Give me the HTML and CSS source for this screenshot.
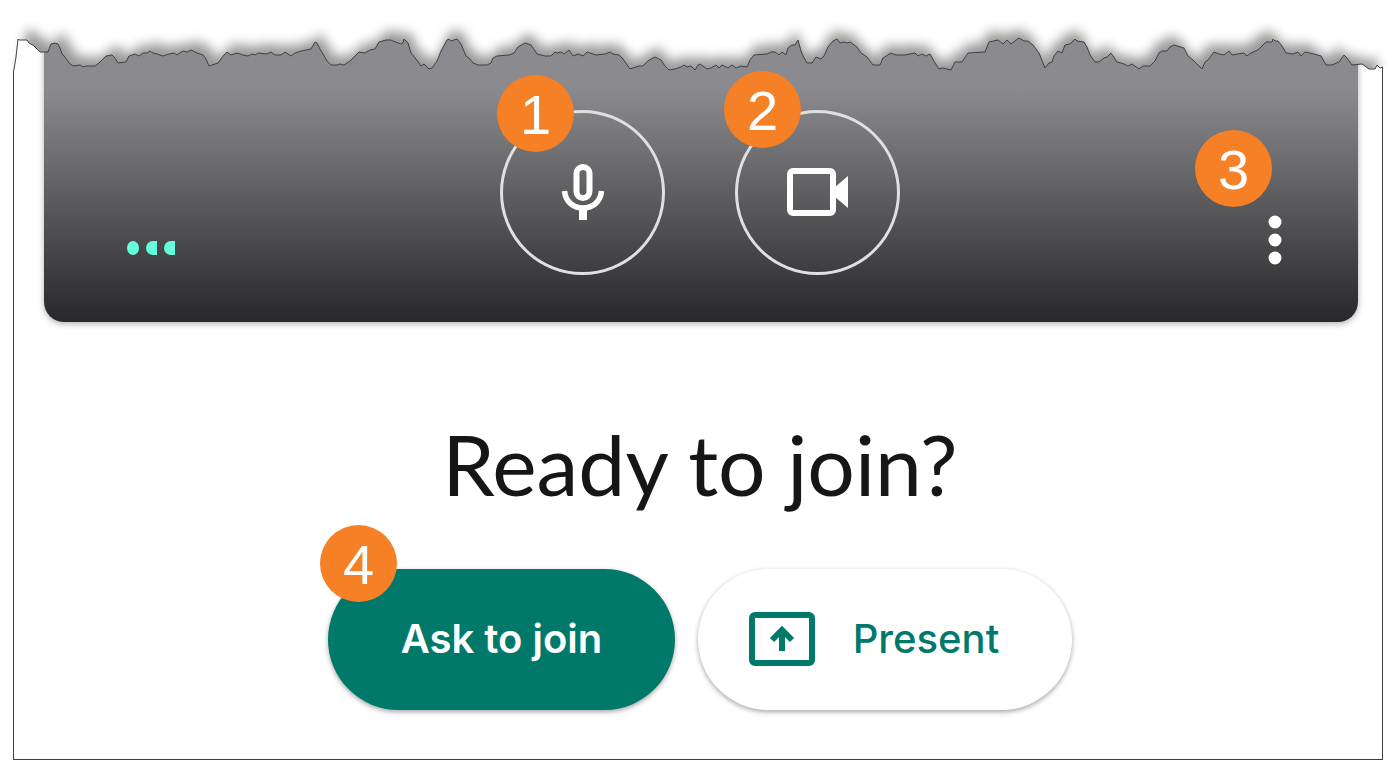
FILE: index.html
```html
<!DOCTYPE html>
<html lang="en">
<head>
    <meta charset="UTF-8">
    <meta name="viewport" content="width=device-width, initial-scale=1.0">
    <title>Ready to join?</title>
    <link rel="stylesheet" href="styles.css">
</head>
<body>

    <main class="frame">
        <section class="preview">
            <svg class="level" viewBox="0 0 50 16" aria-hidden="true">
                <ellipse cx="6" cy="8" rx="6" ry="7"/>
                <path d="M30 1v14h-4a7 7 0 0 1 0-14z"/>
                <path d="M48 1v14h-4a7 7 0 0 1 0-14z"/>
            </svg>

            <div class="controls">
                <div class="control">
                    <button class="round" type="button" aria-label="Turn off microphone">
                        <svg width="44" height="58" viewBox="0 0 44 58">
                            <rect x="15.500" y="4" width="13" height="31" rx="6.500" fill="none" stroke="#fff" stroke-width="6"/>
                            <path d="M3.500 28c1 11 9 17 18.500 17s17.500-6 18.500-17" fill="none" stroke="#fff" stroke-width="5.500"/>
                            <path d="M22 45v12" fill="none" stroke="#fff" stroke-width="8"/>
                        </svg>
                    </button>
                    <span class="badge badge-mic">1</span>
                </div>
                <div class="control">
                    <button class="round" type="button" aria-label="Turn off camera">
                        <svg width="62" height="48" viewBox="0 0 62 48">
                            <rect x="3" y="3" width="43" height="42" rx="3" fill="none" stroke="#fff" stroke-width="6"/>
                            <path d="M47 20L61 8v32L47 28z" fill="#fff"/>
                        </svg>
                    </button>
                    <span class="badge badge-camera">2</span>
                </div>
            </div>

            <div class="control more">
                <button class="menu" type="button" aria-label="More options">
                    <svg width="14" height="50" viewBox="0 0 14 50" fill="#fff">
                        <circle cx="7" cy="7" r="6.500"/>
                        <circle cx="7" cy="25" r="6.500"/>
                        <circle cx="7" cy="43" r="6.500"/>
                    </svg>
                </button>
                <span class="badge badge-more">3</span>
            </div>
        </section>

        <h1>Ready to join?</h1>

        <div class="actions">
            <div class="control">
                <button class="pill ask" type="button">Ask to join</button>
                <span class="badge badge-ask">4</span>
            </div>
            <button class="pill present" type="button">
                <svg width="66" height="54" viewBox="0 0 66 54">
                    <rect x="3" y="3" width="60" height="48" rx="3" fill="none" stroke="#00796b" stroke-width="6"/>
                    <path d="M33 39V19M23 28l10-10 10 10" fill="none" stroke="#00796b" stroke-width="6"/>
                </svg>
                Present
            </button>
        </div>
    </main>

    <!-- Torn paper edge -->
    <svg class="torn" viewBox="0 0 1397 80" preserveAspectRatio="none" aria-hidden="true">
        <defs>
            <filter id="soft" x="-5%" y="-50%" width="110%" height="200%">
                <feGaussianBlur stdDeviation="6"/>
            </filter>
            <clipPath id="above">
                <path id="cut"/>
            </clipPath>
        </defs>
        <g clip-path="url(#above)">
            <rect width="1397" height="80" fill="#fff"/>
            <path id="shadow" class="torn-shadow" transform="translate(8 -9) scale(0.99 1)" filter="url(#soft)"/>
        </g>
        <path id="edge" class="torn-line" d="M13.500 100L13.500 72 16 57 18 39 19 40 27 40 29 43 34 46 37 49 40 52 48 52 51 44 55 43 58 44 60 48 62 54 65 57 69 63 73 66 80 65 83 67 86 66 95 66 99 63 106 56 112 55 115 58 118 63 126 62 129 56 135 54 139 56 143 53 147 53 150 51 153 53 157 54 163 56 169 54 174 53 177 55 183 51 187 52 191 50 197 53 203 55 206 59 209 66 218 63 224 55 227 52 231 55 237 53 243 55 248 56 252 54 255 55 258 53 267 54 271 52 275 55 281 55 285 52 291 56 295 53 301 51 311 49 315 42 317 43 321 51 323 54 327 61 331 65 337 65 340 64 344 65 350 61 359 52 365 53 370 50 375 49 379 42 386 40 391 40 393 41 401 44 403 43 404 39 408 43 411 53 416 59 421 66 424 64 429 69 432 68 437 61 441 51 447 40 449 39 451 41 457 39 461 44 466 56 470 59 473 63 478 65 487 65 491 63 493 58 497 56 509 55 514 53 518 47 525 43 531 45 537 54 545 56 551 56 555 52 557 53 561 52 564 54 569 50 573 56 578 54 583 56 587 52 596 55 605 54 610 52 613 54 619 55 623 59 630 69 639 66 643 66 649 60 655 57 661 60 665 66 669 70 675 69 681 67 684 65 687 67 691 66 695 70 698 65 700 64 707 69 711 68 716 65 719 68 722 65 728 68 732 65 736 68 741 66 747 67 750 60 754 55 767 54 771 52 775 52 779 55 782 52 786 55 788 48 792 45 795 45 798 40 801 51 804 58 807 63 812 63 816 57 821 59 824 56 828 47 833 41 837 39 840 43 844 42 847 43 850 42 857 47 861 53 867 57 873 65 880 65 883 58 891 53 896 55 905 55 915 53 918 56 922 54 926 56 930 54 935 63 939 69 943 68 951 70 955 62 962 62 968 53 985 52 989 42 998 40 1003 44 1007 40 1011 44 1019 38 1024 41 1028 41 1033 45 1039 53 1045 68 1049 63 1052 62 1054 56 1058 51 1062 53 1065 45 1070 44 1075 39 1077 41 1084 42 1087 47 1090 55 1095 62 1099 62 1104 58 1107 57 1111 53 1117 62 1124 64 1128 66 1132 64 1139 69 1143 66 1150 66 1155 61 1159 53 1162 51 1167 51 1170 47 1174 45 1184 48 1188 56 1194 61 1202 69 1205 62 1208 60 1214 52 1219 54 1224 55 1229 51 1232 55 1244 53 1247 56 1251 53 1258 50 1266 42 1272 42 1273 39 1275 41 1278 41 1282 46 1286 53 1293 54 1298 52 1301 56 1305 52 1314 54 1321 56 1326 65 1332 65 1339 62 1344 55 1347 58 1352 65 1362 64 1369 69 1375 69 1377 65 1380 68 1383 67"/>
    </svg>

    <script>
        // Close the torn line upwards for the paper above it and downwards for its shadow
        const line = document.getElementById('edge').getAttribute('d');
        document.getElementById('cut').setAttribute('d', line + ' H1397 V0 H0 V100z');
        document.getElementById('shadow').setAttribute('d', line + ' V100z');
    </script>

</body>
</html>
```
FILE: styles.css
```css
/* Global Styles */
* {
    box-sizing: border-box;
}

body {
    margin: 0;
    position: relative;
    background-color: #fff;
    color: #161616;
    font-family: Lato, 'Open Sans', sans-serif;
}

button {
    padding: 0;
    border: none;
    background: none;
    font-family: inherit;
    cursor: pointer;
}

svg {
    display: block;
}

.frame {
    margin: 0 14px 0 13px;
    padding: 0 24px 49px 30px;
    border: 1px solid #404040;
    border-top: none;
}

/* Camera preview */
.preview {
    display: grid;
    grid-template-columns: 1fr auto 1fr;
    align-items: end;
    padding: 110px 76px 47px 74px;
    border-radius: 0 0 20px 20px;
    background: linear-gradient(#8b8a8e 88px, #28282a);
    box-shadow: 0 2px 6px rgba(60, 64, 67, 0.4);
}

.level {
    width: 50px;
    height: 16px;
    margin: 0 0 19px 9px;
    fill: #64ffda;
}

.controls {
    display: flex;
    gap: 70px;
}

.control {
    position: relative;
}

.round {
    display: flex;
    align-items: center;
    justify-content: center;
    width: 165px;
    height: 165px;
    padding-bottom: 2px;
    border: 3px solid #e0e0e0;
    border-radius: 50%;
}

.more {
    justify-self: end;
    margin-bottom: 10px;
}

.menu {
    display: block;
}

/* Numbered callouts */
.badge {
    position: absolute;
    width: 77px;
    height: 77px;
    border-radius: 50%;
    background-color: #f58025;
    color: #fff;
    font: 56px/79px 'Liberation Sans', sans-serif;
    text-align: center;
}

.badge-mic {
    left: -3px;
    top: -35px;
}

.badge-camera {
    left: -11px;
    top: -39px;
}

.badge-more {
    right: 10px;
    top: -85px;
}

.badge-ask {
    left: -8px;
    top: -44px;
}

/* Heading and buttons */
h1 {
    margin: 92px 0 55px;
    padding-right: 2px;
    font-size: 84px;
    font-weight: 400;
    line-height: 100px;
    text-align: center;
}

.actions {
    display: flex;
    justify-content: center;
    gap: 23px;
    padding-right: 2px;
}

.pill {
    display: flex;
    align-items: center;
    justify-content: center;
    height: 141px;
    padding-bottom: 2px;
    border-radius: 71px;
    font-family: Inter, 'Open Sans', sans-serif;
    font-size: 40px;
    box-shadow: 0 2px 5px rgba(0, 0, 0, 0.35);
}

.ask {
    min-width: 347px;
    background-color: #00796b;
    color: #fff;
    font-weight: 600;
}

.present {
    gap: 38px;
    min-width: 374px;
    padding-right: 22px;
    background-color: #fff;
    color: #00796b;
    font-weight: 500;
}

/* Torn edge over the top of the frame */
.torn {
    position: absolute;
    top: 0;
    left: 0;
    width: 100%;
    height: 80px;
    pointer-events: none;
}

.torn-line {
    fill: none;
    stroke: #404040;
    vector-effect: non-scaling-stroke;
}

.torn-shadow {
    fill: #000;
    opacity: 0.4;
}
```
